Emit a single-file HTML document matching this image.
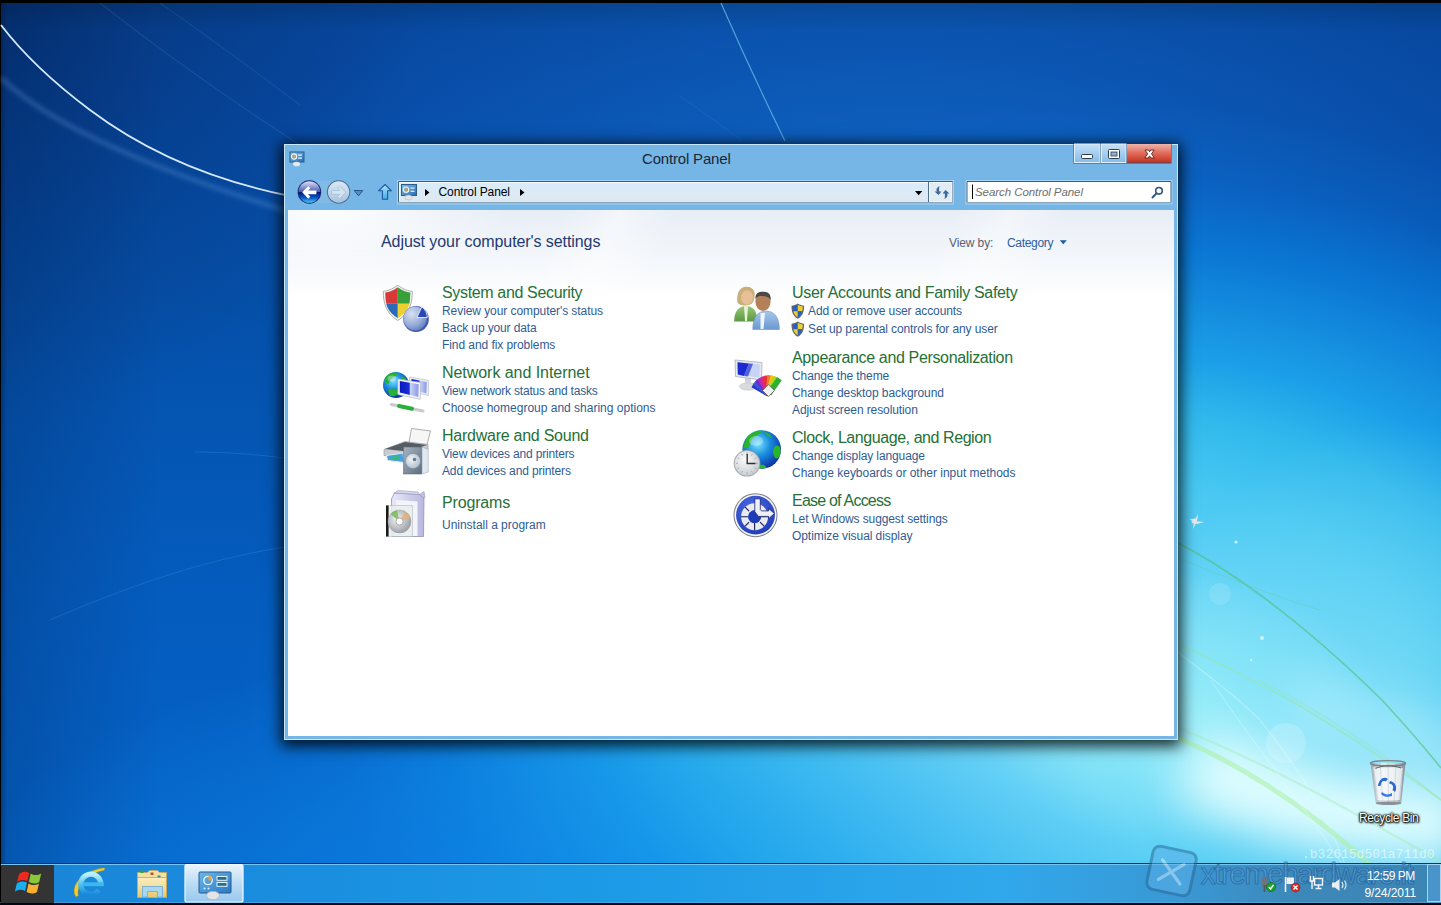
<!DOCTYPE html>
<html><head><meta charset="utf-8">
<style>
*{margin:0;padding:0;box-sizing:border-box}
html,body{width:1441px;height:905px;overflow:hidden;background:#000;font-family:"Liberation Sans",sans-serif}
#desk{position:absolute;left:1px;top:3px;width:1440px;height:902px;overflow:hidden;
 background:
  radial-gradient(ellipse 600px 260px at 560px 897px, rgba(16,140,236,.6) 0%, rgba(16,140,236,.38) 50%, rgba(16,140,236,0) 100%),
  radial-gradient(ellipse 200px 140px at 1179px 707px, rgba(170,250,250,.55) 0%, rgba(170,250,250,.25) 55%, rgba(170,250,250,0) 100%),
  radial-gradient(ellipse 260px 300px at 1399px 717px, rgba(160,236,250,.5) 0%, rgba(150,232,250,0) 100%),
  radial-gradient(ellipse 860px 596px at 1099px 697px, #86e2f8 0%, #66d4f6 21%, #48c8f2 37%, #30b8ec 49%, #1ca0e8 58%, rgba(10,122,216,.85) 77%, rgba(10,110,210,.35) 88%, rgba(8,100,200,0) 100%),
  linear-gradient(to right,rgba(0,20,60,.35) 0,rgba(0,20,60,0) 6px),
  radial-gradient(ellipse 650px 320px at 899px 217px, rgba(22,118,218,.62) 0%, rgba(22,118,218,.3) 50%, rgba(22,118,218,0) 100%),
  linear-gradient(to right,rgba(0,15,50,.18) 0,rgba(0,15,50,0) 160px),
  radial-gradient(circle 420px at 0 0,rgba(0,10,40,.3),rgba(0,10,40,0)),
  linear-gradient(to bottom,#063e86 0,#0748a0 27px,#074aa4 100px,#0550aa 297px,#045cbe 597px,#0563c8 857px);
}
.t{position:absolute;white-space:nowrap;line-height:1}
#win{position:absolute;left:284px;top:144px;width:894px;height:596px;background:#76b6e6;
 border:1px solid #c8e8f8;box-shadow:0 3px 14px 3px rgba(0,0,0,.85)}
#content{position:absolute;left:288px;top:210px;width:886px;height:526px;background:#fff;overflow:hidden}
#content .grad{position:absolute;left:0;top:0;width:100%;height:90px;background:radial-gradient(ellipse 180px 70px at 40px 0,rgba(255,255,255,.85),rgba(255,255,255,0)),linear-gradient(115deg,rgba(255,255,255,0) 30%,rgba(255,255,255,.45) 36%,rgba(255,255,255,0) 42%,rgba(255,255,255,0) 72%,rgba(255,255,255,.4) 78%,rgba(255,255,255,0) 84%),linear-gradient(to bottom,#e8eef6,#f4f7fb 55%,#fff)}
.h{font-size:16px;color:#267036}
.l{font-size:12px;color:#2f5c94}
#taskbar{position:absolute;left:1px;top:863px;width:1440px;height:40px;background:linear-gradient(to right,#1a84d6 0,#1a8ee0 300px,#1c9ae6 600px,#30a8ec 1000px,#3a98d4 1180px,#3c88b8 1300px,#3c86b6 1441px);border-top:1px solid #0e3456;box-shadow:inset 0 1px 0 #78c4f0}
</style></head><body>
<div id="desk"></div>
<svg id="desksvg" width="1441" height="905" style="position:absolute;left:0;top:0">
 <defs><filter id="blur2" x="-20%" y="-20%" width="140%" height="140%"><feGaussianBlur stdDeviation="2"/></filter>
 <filter id="blur1"><feGaussianBlur stdDeviation=".6"/></filter>
 <filter id="blur14" filterUnits="userSpaceOnUse" x="900" y="500" width="700" height="500"><feGaussianBlur stdDeviation="24"/></filter></defs>
 <path d="M1190,760 C1240,785 1290,805 1340,812 C1390,820 1430,822 1470,825" fill="none" stroke="rgba(230,255,255,.95)" stroke-width="80" filter="url(#blur14)"/>
 <path d="M1290,700 C1350,720 1400,740 1470,760" fill="none" stroke="rgba(200,245,255,.5)" stroke-width="60" filter="url(#blur14)"/>
 <path d="M1,25 C20,50 50,80 90,110 C150,155 220,182 290,196" fill="none" stroke="#d4eafc" stroke-width="1.8" filter="url(#blur1)"/>
 <path d="M1,78 C40,115 120,160 290,212" fill="none" stroke="rgba(140,200,255,.22)" stroke-width="5" filter="url(#blur2)"/>
 <path d="M100,3 C160,50 230,100 300,145" fill="none" stroke="rgba(140,200,255,.12)" stroke-width="1.2"/>
 <path d="M160,3 C220,45 260,75 300,105" fill="none" stroke="rgba(140,200,255,.10)" stroke-width="1.2"/>
 <path d="M721,3 C735,35 760,90 785,141" fill="none" stroke="rgba(110,190,235,.75)" stroke-width="1.2"/>
 <path d="M680,96 C700,110 725,128 742,141" fill="none" stroke="rgba(110,180,235,.12)" stroke-width="1"/>
 <path d="M195,452 C230,452 260,455 285,458" fill="none" stroke="rgba(140,200,255,.15)" stroke-width="1"/>
 <path d="M50,620 C120,590 200,560 285,547" fill="none" stroke="rgba(140,200,255,.15)" stroke-width="1"/>
 <!-- right side streaks -->
 <path d="M1178,543 C1230,570 1300,620 1382,700 C1405,725 1425,748 1441,768" fill="none" stroke="rgba(80,190,120,.6)" stroke-width="1.6"/>
 <path d="M1178,558 C1220,575 1270,595 1320,610" fill="none" stroke="rgba(100,200,150,.35)" stroke-width="1"/>
 <path d="M1178,644 C1215,660 1260,685 1290,700 C1350,735 1400,770 1441,800" fill="none" stroke="rgba(150,230,170,.55)" stroke-width="1.6"/>
 <path d="M1178,652 C1200,670 1230,690 1260,720 C1300,770 1330,820 1345,865" fill="none" stroke="rgba(230,255,255,.35)" stroke-width="1.2"/>
 <path d="M1178,738 C1230,760 1300,800 1370,865" fill="none" stroke="rgba(170,240,160,.55)" stroke-width="5" filter="url(#blur1)"/>
 <path d="M1178,728 C1260,760 1350,810 1441,862" fill="none" stroke="rgba(160,235,170,.4)" stroke-width="2"/>
 <path d="M1258,680 C1320,710 1380,750 1441,800" fill="none" stroke="rgba(150,230,160,.35)" stroke-width="1.4"/>
 <path d="M1211,680 C1250,740 1300,800 1343,865" fill="none" stroke="rgba(235,255,255,.35)" stroke-width="1"/>
 <circle cx="1286" cy="743" r="20" fill="rgba(255,255,255,.18)"/>
 <circle cx="1220" cy="594" r="11" fill="rgba(255,255,255,.12)"/>
 <circle cx="1236" cy="542" r="1.5" fill="rgba(255,255,255,.7)"/>
 <circle cx="1262" cy="638" r="2" fill="rgba(255,255,255,.6)"/>
 <circle cx="1251" cy="660" r="1.3" fill="rgba(255,255,255,.5)"/>
 <g transform="translate(1194,521)" fill="#f4f0f0" opacity=".9">
  <path d="M0,0 L4,-7 L3,0 Z"/><path d="M0,0 L10,1 L2,3 Z"/><path d="M0,0 L-1,8 L2,2 Z"/><path d="M0,0 L-5,-2 L1,-2 Z"/>
  <circle cx="0" cy="0" r="2.5"/>
 </g>
 <!-- recycle bin -->
 <defs>
  <linearGradient id="gBin" x1="0" y1="0" x2="1" y2="0"><stop offset="0" stop-color="#9ca4ac"/><stop offset=".35" stop-color="#e4eaee"/><stop offset=".7" stop-color="#c8d0d6"/><stop offset="1" stop-color="#848c94"/></linearGradient>
 </defs>
 <g>
  <path d="M1370.5,763 L1405.5,763 L1401.2,803.5 L1375.8,803.5 Z" fill="url(#gBin)" opacity=".95"/>
  <path d="M1373,767 C1380,770 1392,766 1403,768 L1400,800 L1377,800 Z" fill="rgba(250,252,255,.75)"/>
  <path d="M1373,763 L1378,803 M1380,763 L1383,803 M1388,763 L1388.5,803 M1396,763 L1394,803 M1403,763 L1399,803" stroke="rgba(120,130,140,.35)" stroke-width=".7"/>
  <ellipse cx="1388" cy="763.2" rx="17.6" ry="2.6" fill="none" stroke="#7a828a" stroke-width="1.3"/>
  <path d="M1375.5,768.5 C1382,765 1394,765 1401,768" stroke="#5a6066" stroke-width="1" fill="none"/>
  <path d="M1378,786 C1379,779 1384,776 1388,779 L1385.5,781.5 C1383,780 1381,782 1380.5,786 Z" fill="#2a6ad8"/>
  <path d="M1390,781 C1395,782 1398,787 1395,792 L1392.5,790 C1394,787 1393,784 1389,783.5 Z" fill="#2a6ad8"/>
  <path d="M1382,792 C1385,795 1389,795 1392,793 L1392,796 C1388,797.5 1384,797 1381,794 Z" fill="#3a7ae0"/>
  <ellipse cx="1388.5" cy="803.2" rx="12.8" ry="1.8" fill="#8a9096"/>
 </g>
</svg>
<div class="t" style="left:1359px;top:812px;font-size:12px;letter-spacing:-.36px;color:#fff;text-shadow:0 0 1px #000,0 0 2px #000,0 0 2px #000,1px 1px 2px #000,0 0 3px rgba(0,0,0,.8)">Recycle Bin</div>

<div id="win"></div>
<div id="content"><div class="grad"></div></div>

<svg id="chrome" width="1441" height="905" style="position:absolute;left:0;top:0">
 <defs>
  <linearGradient id="gBackTop" x1="0" y1="0" x2="0" y2="1"><stop offset="0" stop-color="#e4e0fa"/><stop offset="1" stop-color="#4858b0"/></linearGradient>
  <linearGradient id="gBackBot" x1="0" y1="0" x2="0" y2="1"><stop offset="0" stop-color="#001478"/><stop offset=".55" stop-color="#0a5ac8"/><stop offset="1" stop-color="#48d0f4"/></linearGradient>
  <linearGradient id="gFwd" x1="0" y1="0" x2="0" y2="1"><stop offset="0" stop-color="#dce8f4"/><stop offset="1" stop-color="#a4c4e0"/></linearGradient>
  <linearGradient id="gAddr" x1="0" y1="0" x2="0" y2="1"><stop offset="0" stop-color="#d8ecfa"/><stop offset="1" stop-color="#dee9f1"/></linearGradient>
  <linearGradient id="gCapBtn" x1="0" y1="0" x2="0" y2="1"><stop offset="0" stop-color="#c6e0f6"/><stop offset="1" stop-color="#86bce8"/></linearGradient>
  <linearGradient id="gClose" x1="0" y1="0" x2="0" y2="1"><stop offset="0" stop-color="#f0b4aa"/><stop offset=".5" stop-color="#e06a5a"/><stop offset="1" stop-color="#c8301c"/></linearGradient>
  <linearGradient id="gUp" x1="0" y1="0" x2="0" y2="1"><stop offset="0" stop-color="#b0e4fc"/><stop offset="1" stop-color="#48a8e8"/></linearGradient>
  <linearGradient id="gCPscr" x1="0" y1="0" x2="1" y2="1"><stop offset="0" stop-color="#7cc0ec"/><stop offset="1" stop-color="#2a6cb0"/></linearGradient>
 </defs>
 <!-- title icon -->
 <g transform="translate(289.5,151.5)">
  <rect x="0.5" y="0.5" width="14" height="10" fill="url(#gCPscr)" stroke="#2a5c8c"/>
  <circle cx="4.5" cy="5" r="2.6" fill="none" stroke="#f4f4f4" stroke-width="1.2"/><circle cx="4.5" cy="5" r="1.3" fill="#d8b040"/>
  <rect x="8.5" y="3" width="4" height="1.2" fill="#e8f8ff"/><rect x="8.5" y="6" width="4" height="1.2" fill="#e8f8ff"/>
  <ellipse cx="7" cy="12.5" rx="3.5" ry="2.3" fill="#e8e8ea"/>
 </g>
 <!-- caption buttons -->
 <rect x="1073.5" y="144" width="98" height="19.5" fill="#2e5070"/>
 <rect x="1074.5" y="144" width="25.5" height="18.5" fill="url(#gCapBtn)" stroke="#dff0fc" stroke-width="1"/>
 <rect x="1101.5" y="144" width="24.5" height="18.5" fill="url(#gCapBtn)" stroke="#dff0fc" stroke-width="1"/>
 <rect x="1127" y="144" width="44" height="18.5" fill="url(#gClose)"/>
 <rect x="1081.5" y="154.5" width="11" height="4" rx="1" fill="#fff" stroke="#2a3c50" stroke-width="1"/>
 <rect x="1108.5" y="149.5" width="11" height="9" rx="1" fill="#fff" stroke="#2a3c50" stroke-width="1"/>
 <rect x="1111" y="152" width="6" height="4" fill="#8ab0d8" stroke="#2a3c50" stroke-width=".8"/>
 <path d="M1145,150 L1148.5,150 L1149.6,151.8 L1150.7,150 L1154.2,150 L1151.5,153.8 L1154.4,158 L1150.9,158 L1149.6,155.9 L1148.3,158 L1144.8,158 L1147.7,153.8 Z" fill="#fff" stroke="#5a2018" stroke-width=".9"/>
 <!-- nav pill -->
 <path d="M309,181 L339,181 A11,11 0 0 1 339,203 L309,203 A11,11 0 0 1 309,181 Z" fill="#88bce6" opacity=".7"/>
 <!-- back button -->
 <circle cx="309.4" cy="192" r="11.8" fill="#14286a"/>
 <path d="M298.6,192 A10.8,10.8 0 0 1 320.2,192 Z" fill="url(#gBackTop)"/>
 <path d="M298.6,192 A10.8,10.8 0 0 0 320.2,192 Z" fill="url(#gBackBot)"/>
 <path d="M302.2,192.3 L308.2,186.2 L310.4,188.2 L307.9,190.5 L316.4,190.5 L316.4,194.3 L307.9,194.3 L310.4,196.6 L308.2,198.7 Z" fill="#fff"/>
 <!-- forward button -->
 <circle cx="338.6" cy="192" r="11.7" fill="#4f6f8f"/>
 <circle cx="338.6" cy="192" r="10.7" fill="url(#gFwd)"/>
 <path transform="translate(647.9,0) scale(-1,1)" d="M302.2,192.3 L308.2,186.2 L310.4,188.2 L307.9,190.5 L316.4,190.5 L316.4,194.3 L307.9,194.3 L310.4,196.6 L308.2,198.7 Z" fill="#d4e4f2" stroke="#9ab8d4" stroke-width=".6"/>
 <!-- dropdown -->
 <path d="M354.2,190.5 L362.8,190.5 L358.5,195.8 Z" fill="#5a8cc4" stroke="#244c84" stroke-width=".9"/>
 <!-- up arrow -->
 <path d="M385,184.5 L391.5,190.8 L387.6,190.8 L387.6,199.2 L382.4,199.2 L382.4,190.8 L378.5,190.8 Z" fill="url(#gUp)" stroke="#1a5c9c" stroke-width="1.1" stroke-linejoin="round"/>
 <!-- address bar -->
  <rect x="397.5" y="180.5" width="556" height="23.5" fill="none" stroke="#a8d8fc" stroke-width="1" opacity=".85"/>
 <rect x="398" y="181" width="555" height="22" fill="url(#gAddr)"/>
 <path d="M398.5,202.5 L398.5,181.5 L952.5,181.5 L952.5,202.5" fill="none" stroke="#3e5e7c" stroke-width="1"/>
 <line x1="398" y1="202.5" x2="953" y2="202.5" stroke="#8aa4b8" stroke-width="1"/>
 <path d="M399.5,201.5 L399.5,182.5 L951.5,182.5" fill="none" stroke="#f4faff" stroke-width="1"/>
 <line x1="928.5" y1="182" x2="928.5" y2="202" stroke="#4e6e8c" stroke-width="1"/>
 <rect x="929.5" y="182.5" width="22.5" height="19" fill="#e2ecf4" stroke="#f4f9fd" stroke-width="1"/>
 <g transform="translate(401.5,184.5)">
  <rect x="0" y="0" width="15" height="11" fill="url(#gCPscr)" stroke="#2a5c8c"/>
  <circle cx="4.5" cy="5.2" r="2.7" fill="none" stroke="#f4f4f4" stroke-width="1.2"/><circle cx="4.5" cy="5.2" r="1.4" fill="#d0a840"/>
  <rect x="9" y="3" width="4" height="1.2" fill="#e8f8ff"/><rect x="9" y="6.2" width="4" height="1.2" fill="#e8f8ff"/>
  <ellipse cx="7" cy="13" rx="3.8" ry="2.4" fill="#e6e4e8" stroke="#b0b0b8" stroke-width=".5"/>
 </g>
 <path d="M425,189 L429.5,192.5 L425,196 Z" fill="#000"/>
 <path d="M520,189 L524.5,192.5 L520,196 Z" fill="#000"/>
 <path d="M915,191 L922.3,191 L918.65,195.2 Z" fill="#000"/>
 <!-- refresh icon -->
 <path d="M939.5,186 C936.5,187.5 936,189.5 936.8,191.5 L934.5,191.5 L938.5,195 L941.5,191.5 L939.3,191.5 C938.8,189.5 939.2,187.5 939.5,186 Z" fill="#3a6aa0"/>
 <path d="M944.5,199 C947.5,197.5 948,195.5 947.2,193.5 L949.5,193.5 L945.5,190 L942.5,193.5 L944.7,193.5 C945.2,195.5 944.8,197.5 944.5,199 Z" fill="#3a6aa0"/>
 <!-- search box -->
  <rect x="966" y="180.5" width="206" height="23.5" fill="none" stroke="#a8d8fc" stroke-width="1" opacity=".85"/>
 <rect x="966.5" y="181" width="205" height="22" fill="#fff"/>
 <path d="M967,202.5 L967,181.5 L1171,181.5 L1171,202.5" fill="none" stroke="#3e5e7c" stroke-width="1"/>
 <line x1="966.5" y1="202.5" x2="1171.5" y2="202.5" stroke="#8aa4b8" stroke-width="1"/>
 <line x1="972.5" y1="184.5" x2="972.5" y2="199" stroke="#000" stroke-width="1"/>
 <circle cx="1159" cy="190.8" r="3.3" fill="none" stroke="#345a80" stroke-width="1.6"/>
 <line x1="1156.6" y1="193.3" x2="1152.5" y2="197.5" stroke="#345a80" stroke-width="2" stroke-linecap="round"/>
</svg>
<div class="t" style="left:642px;top:151px;font-size:15px;letter-spacing:-0.18px;color:#1a2636">Control Panel</div>
<div class="t" style="left:438.5px;top:186px;font-size:12px;letter-spacing:-0.1px;color:#000">Control Panel</div>
<div class="t" style="left:975px;top:187px;font-size:11.5px;letter-spacing:-0.07px;color:#6e6e6e;font-style:italic">Search Control Panel</div>


<svg id="icons" width="1441" height="905" style="position:absolute;left:0;top:0">
 <defs>
  <radialGradient id="gDisc" cx=".35" cy=".3" r=".8"><stop offset="0" stop-color="#d8e2f4"/><stop offset=".6" stop-color="#98acd8"/><stop offset="1" stop-color="#5a74b8"/></radialGradient>
  <radialGradient id="gGlobe" cx=".4" cy=".35" r=".7"><stop offset="0" stop-color="#7ae4fc"/><stop offset=".45" stop-color="#1a8ee0"/><stop offset="1" stop-color="#0a2aa0"/></radialGradient>
  <linearGradient id="gScreen" x1="0" y1="0" x2="1" y2="0"><stop offset="0" stop-color="#0a18c0"/><stop offset=".5" stop-color="#1a30d8"/><stop offset=".55" stop-color="#c8d4f8"/><stop offset="1" stop-color="#8898e8"/></linearGradient>
  <linearGradient id="gGrayBox" x1="0" y1="0" x2="1" y2="1"><stop offset="0" stop-color="#8a98a8"/><stop offset="1" stop-color="#56687a"/></linearGradient>
  <radialGradient id="gSpk" cx=".4" cy=".4" r=".7"><stop offset="0" stop-color="#f0f4f8"/><stop offset="1" stop-color="#a8b8c8"/></radialGradient>
  <linearGradient id="gBox" x1="0" y1="0" x2="1" y2="0"><stop offset="0" stop-color="#e8e8f8"/><stop offset="1" stop-color="#b8b8e0"/></linearGradient>
  <radialGradient id="gCD" cx=".4" cy=".4" r=".7"><stop offset="0" stop-color="#f4f4f4"/><stop offset=".6" stop-color="#b8bcc0"/><stop offset="1" stop-color="#909498"/></radialGradient>
  <radialGradient id="gEase" cx=".4" cy=".3" r=".8"><stop offset="0" stop-color="#4a6ae0"/><stop offset="1" stop-color="#1e38b8"/></radialGradient>
  <radialGradient id="gClk" cx=".4" cy=".35" r=".7"><stop offset="0" stop-color="#fafafa"/><stop offset="1" stop-color="#c8ccd0"/></radialGradient>
  <linearGradient id="gGreenB" x1="0" y1="0" x2="0" y2="1"><stop offset="0" stop-color="#98c878"/><stop offset="1" stop-color="#5a9840"/></linearGradient>
  <linearGradient id="gBlueB" x1="0" y1="0" x2="0" y2="1"><stop offset="0" stop-color="#a8c8ec"/><stop offset="1" stop-color="#6a98d0"/></linearGradient>
 </defs>
 <!-- System & Security: shield + disc -->
 <g>
  <path d="M397.8,285.3 C392,289.5 387.5,290.8 383.3,291.4 C383.3,302 385.5,313 397.8,320.5 C410.2,313 412.3,302 412.3,291.4 C408,290.8 403.6,289.5 397.8,285.3 Z" fill="#f4f4f4" stroke="#9a9a9a" stroke-width=".8"/>
  <path d="M397.8,287.2 C393,290.6 389.3,291.8 385.3,292.6 C385.3,296 385.5,300 386.3,303.8 L397.8,303.8 Z" fill="#d83838"/>
  <path d="M397.8,287.2 C402.6,290.6 406.3,291.8 410.3,292.6 C410.3,296 410.1,300 409.3,303.8 L397.8,303.8 Z" fill="#38a038"/>
  <path d="M386.3,303.8 L397.8,303.8 L397.8,318.3 C390.5,313.5 387.4,309 386.3,303.8 Z" fill="#2a6ab8"/>
  <path d="M409.3,303.8 L397.8,303.8 L397.8,318.3 C405.1,313.5 408.2,309 409.3,303.8 Z" fill="#eed030"/>
  <ellipse cx="416" cy="319" rx="12.8" ry="13" fill="#3a58b0"/>
  <ellipse cx="415.2" cy="318.6" rx="11.6" ry="12" fill="url(#gDisc)"/>
  <path d="M417,317.5 L421.8,306.8 C425.2,309.2 427.2,313.2 427.3,317.5 Z" fill="#2a48b0" stroke="#d8e4fc" stroke-width="1"/>
 </g>
 <!-- Network -->
 <g>
  <circle cx="396" cy="385" r="13" fill="url(#gGlobe)"/>
  <path d="M384.5,380 C386,374.5 391,372 396,372.5 C399,373 398,375.5 394.5,376.5 C391,377.5 390,380 389,383 C387,384 385,383 384.5,380 Z M388,390 C391,387.5 396,388 398.5,391.5 C398,395.5 393,397.5 389.5,395.5 Z M401,376 C404,376.5 406.5,379 407,382 C404,381.5 402,379.5 401,376 Z" fill="#28b030"/>
  <ellipse cx="392" cy="378.5" rx="4.5" ry="3" fill="rgba(255,255,255,.35)"/>
  <path d="M409.6,377 L428.7,380.5 L428.2,395.6 L409.6,391 Z" fill="#f0f0f4" stroke="#b8bcc8" stroke-width=".7"/>
  <path d="M411.5,379 L426.8,382 L426.4,393.5 L411.5,389.5 Z" fill="url(#gScreen)"/>
  <path d="M397.8,378.9 L420.7,382.5 L420.2,399.3 L397.8,394.5 Z" fill="#f4f4f8" stroke="#b0b4c0" stroke-width=".7"/>
  <path d="M399.8,381 L418.7,384.2 L418.3,397 L399.8,392.6 Z" fill="url(#gScreen)"/>
  <path d="M391.5,404.5 L423,411" stroke="#c8ccd0" stroke-width="3.2" stroke-linecap="round"/>
  <path d="M399,406 L412,408.7" stroke="#28b038" stroke-width="4" stroke-linecap="round"/>
 </g>
 <!-- Hardware & Sound -->
 <g>
  <path d="M408.5,444.5 L411.5,428.5 L430.5,431 L426.5,446.5 Z" fill="#f6f6f6" stroke="#9a9a9a" stroke-width=".8"/>
  <path d="M384,449.5 L405,441.5 L428,444.5 L428,450 L406,457 L384,455.5 Z" fill="#c8ccd0" stroke="#8a9096" stroke-width=".6"/>
  <path d="M385,449 L405,442 L427,445 L407,451.5 Z" fill="#565c64"/>
  <path d="M386.5,455.5 L403,453 L404,462.5 L387.5,460.5 Z" fill="#48a0e0" stroke="#e4eef6" stroke-width="1"/>
  <path d="M390,457 L399,455.5 L400,459.5 L391,460 Z" fill="#30c060" opacity=".7"/>
 </g>
 <g>
  <defs><linearGradient id="gSpkF" x1="0" y1="0" x2="1" y2="1"><stop offset="0" stop-color="#a8b4c2"/><stop offset="1" stop-color="#5e6c7c"/></linearGradient></defs>
  <rect x="403.5" y="447" width="18.5" height="27" fill="url(#gSpkF)" stroke="#56626e" stroke-width=".5"/>
  <path d="M422,447 L428.3,449.5 L428.3,472 L422,474 Z" fill="#dfe8f0" stroke="#9aa6b2" stroke-width=".5"/>
  <circle cx="413" cy="461" r="7.6" fill="url(#gSpk)" stroke="#7a8a9a" stroke-width=".6"/>
  <circle cx="414.5" cy="459.5" r="1.8" fill="#6a7a88"/>
 </g>
 <!-- Programs -->
 <g>
  <path d="M391.5,499 L394.5,493 L419.5,494.5 L424,498 L423.5,536.5 L392,536.5 Z" fill="url(#gBox)" stroke="#9090b8" stroke-width=".8"/>
  <path d="M394.5,493 L398,490.5 L418,492 L419.5,494.5 Z" fill="#d8d8f0" stroke="#9898c0" stroke-width=".6"/>
  <path d="M419.5,494.5 L424,491.5 L425,497.5 L424,498 Z" fill="#c0c0e4" stroke="#9898c0" stroke-width=".6"/>
  <path d="M396,500 L417.5,501.5 L417.5,536 L396,536 Z" fill="#f4f4fc"/>
  <rect x="386.5" y="505.5" width="26" height="31" fill="rgba(232,238,236,.85)" stroke="#a8b0b0" stroke-width=".5"/>
  <rect x="386" y="505.5" width="2.6" height="31" fill="#1a1a1a"/>
  <circle cx="399.5" cy="521.5" r="11.5" fill="url(#gCD)" stroke="#a0a4a8" stroke-width=".5"/>
  <path d="M399.5,521.5 L390.5,514 A11.5,11.5 0 0 1 397,510.3 Z" fill="#70b848" opacity=".75"/>
  <path d="M399.5,521.5 L405,511.5 A11.5,11.5 0 0 1 410.5,518 Z" fill="#e8b070" opacity=".75"/>
  <circle cx="399.5" cy="521.5" r="3.6" fill="#fafafa" stroke="#9aa0a4" stroke-width=".8"/>
 </g>
 <!-- User accounts -->
 <g>
  <path d="M734.2,321.5 C734,311 739,306 746,306 C753,306 757.5,311 757.2,321.5 Z" fill="url(#gGreenB)"/>
  <path d="M744,306 L748,306 L747,321 L745,321 Z" fill="#e8f0d8"/>
  <path d="M737.3,302 C736.5,293 740,287 746,286.8 C752.5,286.5 755.5,291 754.6,296 C754,302 752,305.5 746,305.5 C741,305.5 738,304.5 737.3,302 Z" fill="#c8b078"/>
  <ellipse cx="747" cy="297.5" rx="6" ry="7.2" fill="#e8c098"/>
  <path d="M752.8,329.5 C752.5,317 758,311 766,311 C774,311 779.5,317 779.4,329.5 Z" fill="url(#gBlueB)" stroke="#6a8ab8" stroke-width=".5"/>
  <path d="M760.5,313 L765,313 L763.5,329 L760.5,329 Z" fill="#f0f4f8"/>
  <ellipse cx="763" cy="301.5" rx="7.6" ry="9.4" fill="#b48058"/>
  <path d="M755.5,299 C755,293 759,291.5 764,291.8 C769,292 771,295 770.7,300 C769,296.5 765,295.5 760,296 C757,296.5 756,298 755.5,299 Z" fill="#4a4848"/>
 </g>
 <!-- Appearance -->
 <g>
  <ellipse cx="748" cy="386.5" rx="8.5" ry="3.8" fill="#d8dadc" stroke="#c0c4c8" stroke-width=".5"/>
  <rect x="745" y="378" width="6" height="6" fill="#d0d4d8"/>
  <path d="M735.1,360 L762,362.5 L761.5,380 L735.5,376.5 Z" fill="#e4e8ee" stroke="#a8b0bc" stroke-width=".8"/>
  <path d="M737.5,362.3 L759.8,364.4 L759.4,377.6 L737.8,374.6 Z" fill="#c8d4f4"/>
  <path d="M737.5,362.3 L749,363.4 L744,376 L737.8,374.6 Z" fill="#1a2ad0"/>
  <path d="M749,363.4 L753,363.8 L748,376.6 L744,376 Z" fill="#5060e0"/>
 <rect x="0" y="-3" width="18.5" height="5.6" fill="#2838c8" transform="translate(769,394) rotate(-150.0)"/>
 <rect x="0" y="-3" width="18.5" height="5.6" fill="#3a58d8" transform="translate(769,394) rotate(-139.4)"/>
 <rect x="0" y="-3" width="18.5" height="5.6" fill="#6a30c8" transform="translate(769,394) rotate(-128.9)"/>
 <rect x="0" y="-3" width="18.5" height="5.6" fill="#b828c0" transform="translate(769,394) rotate(-118.3)"/>
 <rect x="0" y="-3" width="18.5" height="5.6" fill="#e02878" transform="translate(769,394) rotate(-107.8)"/>
 <rect x="0" y="-3" width="18.5" height="5.6" fill="#e83030" transform="translate(769,394) rotate(-97.2)"/>
 <rect x="0" y="-3" width="18.5" height="5.6" fill="#f07820" transform="translate(769,394) rotate(-86.7)"/>
 <rect x="0" y="-3" width="18.5" height="5.6" fill="#f0c020" transform="translate(769,394) rotate(-76.1)"/>
 <rect x="0" y="-3" width="18.5" height="5.6" fill="#a8d820" transform="translate(769,394) rotate(-65.6)"/>
 <rect x="0" y="-3" width="18.5" height="5.6" fill="#30b030" transform="translate(769,394) rotate(-55.0)"/>
  <path d="M762.5,390.5 L768.5,384.5 L774.5,390.5 L768.5,396.5 Z" fill="#f0f0f0" stroke="#505050" stroke-width=".7"/>
 </g>
 <!-- Clock & globe -->
 <g>
  <circle cx="761.7" cy="449.5" r="19.3" fill="url(#gGlobe)"/>
  <path d="M743.5,447 C744.5,438 751,431.5 759,430.5 C763,430.5 762,433 758,434.5 C753,436.5 751,440 750,445 C748.5,448.5 744,449.5 743.5,447 Z M773.5,448 C776,443.5 780.5,445 780.8,451 C780.5,458 776,461 774,456 C773,453 772.5,450.5 773.5,448 Z M757,465.5 C760.5,463.5 765,464.5 766.5,467.5 C763,469.5 759.5,469 757,465.5 Z M764,432 C768,432.5 771,434.5 772,437 C769,437 766,435 764,432 Z" fill="#2ab42a"/>
  <ellipse cx="756" cy="441" rx="7" ry="5" fill="rgba(255,255,255,.3)"/>
  <circle cx="747" cy="463.3" r="13.3" fill="#a8acb0"/>
  <circle cx="747" cy="463.3" r="12.2" fill="url(#gClk)"/>
  <g stroke="#9aa0a6" stroke-width=".9"><path d="M747,452.5 L747,454.3 M747,472.3 L747,474.1 M736.2,463.3 L738,463.3 M756,463.3 L757.8,463.3 M752.4,454 L751.5,455.5 M741.6,454 L742.5,455.5 M756.3,468.7 L754.8,467.8 M737.7,468.7 L739.2,467.8 M752.4,472.6 L751.5,471.1 M741.6,472.6 L742.5,471.1 M756.3,457.9 L754.8,458.8 M737.7,457.9 L739.2,458.8"/></g>
  <path d="M747.2,454 L747.2,463.5 L755.5,463.5" fill="none" stroke="#303030" stroke-width="1.4"/>
 </g>
 <!-- Ease of access -->
 <g>
  <circle cx="755.5" cy="515.2" r="22" fill="#7a7e86"/>
  <circle cx="755.5" cy="515.2" r="21" fill="#f4f6fa"/>
  <circle cx="755.5" cy="515.2" r="19.4" fill="url(#gEase)"/>
  <circle cx="754.6" cy="516.7" r="9.95" fill="none" stroke="#e8eaf0" stroke-width="7.1"/>
  <g stroke="#101c50" stroke-width="1.1">
   <path d="M741,516.7 L748.2,516.7 M754.6,523.1 L754.6,530.2 M749.1,522.2 L745.1,526.2 M760.1,522.2 L764.1,526.2 M749.1,511.2 L745.1,507.2 M761,516.7 L768.2,516.7"/>
  </g>
  <circle cx="754.6" cy="516.7" r="6.4" fill="#1f3cb8"/>
  <path d="M754.8,498.8 L760.3,498.8 L760.3,509.6 L761.5,510.9 L768.6,510.9 L768.6,508.4 L774.4,513.6 L768.6,518.8 L768.6,516.4 L758.4,516.4 L754.8,511.8 Z" fill="#eef0f6" stroke="#14226a" stroke-width=".8" stroke-linejoin="round"/>
 </g>
 <!-- UAC shields next to links -->
 <g id="uac">
  <path d="M797.8,303.5 C795.5,305 793.5,305.5 791.5,305.7 C791.5,311 792.5,316 797.8,318.7 C803.1,316 804.1,311 804.1,305.7 C802.1,305.5 800.1,305 797.8,303.5 Z" fill="#606870"/>
  <path d="M797.8,304.8 C795.8,306 794.3,306.4 792.8,306.6 C792.8,308.5 793,310 793.4,311.2 L797.8,311.2 Z" fill="#2a60c0"/>
  <path d="M797.8,304.8 C799.8,306 801.3,306.4 802.8,306.6 C802.8,308.5 802.6,310 802.2,311.2 L797.8,311.2 Z" fill="#f0d030"/>
  <path d="M793.4,311.2 L797.8,311.2 L797.8,317.2 C795,315.5 793.9,313.5 793.4,311.2 Z" fill="#f0d030"/>
  <path d="M802.2,311.2 L797.8,311.2 L797.8,317.2 C800.6,315.5 801.7,313.5 802.2,311.2 Z" fill="#2a60c0"/>
 </g>
 <use href="#uac" transform="translate(0,18)"/>
 <!-- view by triangle -->
 <path d="M1059.8,240.2 L1066.8,240.2 L1063.3,244.2 Z" fill="#1e5aa0"/>
</svg>
<div class="t" style="left:381px;top:234px;font-size:16px;letter-spacing:-0.08px;color:#1e3a70">Adjust your computer's settings</div>
<div class="t" style="left:949px;top:237px;font-size:12px;letter-spacing:-0.11px;color:#5a6272">View by:</div>
<div class="t" style="left:1007px;top:237px;font-size:12px;letter-spacing:-0.31px;color:#2a5fa0">Category</div>
<div class="t h" style="left:442px;top:285px;letter-spacing:-0.347px">System and Security</div>
<div class="t l" style="left:442px;top:305px;letter-spacing:-0.071px">Review your computer's status</div>
<div class="t l" style="left:442px;top:322px;letter-spacing:-0.131px">Back up your data</div>
<div class="t l" style="left:442px;top:339px;letter-spacing:-0.07px">Find and fix problems</div>
<div class="t h" style="left:442px;top:365px;letter-spacing:-0.047px">Network and Internet</div>
<div class="t l" style="left:442px;top:385px;letter-spacing:-0.193px">View network status and tasks</div>
<div class="t l" style="left:442px;top:402px">Choose homegroup and sharing options</div>
<div class="t h" style="left:442px;top:428px;letter-spacing:-0.25px">Hardware and Sound</div>
<div class="t l" style="left:442px;top:448px;letter-spacing:-0.167px">View devices and printers</div>
<div class="t l" style="left:442px;top:465px;letter-spacing:-0.135px">Add devices and printers</div>
<div class="t h" style="left:442px;top:495px;letter-spacing:-0.164px">Programs</div>
<div class="t l" style="left:442px;top:519px;letter-spacing:-0.022px">Uninstall a program</div>
<div class="t h" style="left:792px;top:285px;letter-spacing:-0.333px">User Accounts and Family Safety</div>
<div class="t l" style="left:808px;top:305px;letter-spacing:-0.104px">Add or remove user accounts</div>
<div class="t l" style="left:808px;top:323px;letter-spacing:-0.103px">Set up parental controls for any user</div>
<div class="t h" style="left:792px;top:350px;letter-spacing:-0.352px">Appearance and Personalization</div>
<div class="t l" style="left:792px;top:370px;letter-spacing:-0.1px">Change the theme</div>
<div class="t l" style="left:792px;top:387px;letter-spacing:-0.062px">Change desktop background</div>
<div class="t l" style="left:792px;top:404px;letter-spacing:-0.096px">Adjust screen resolution</div>
<div class="t h" style="left:792px;top:430px;letter-spacing:-0.431px">Clock, Language, and Region</div>
<div class="t l" style="left:792px;top:450px;letter-spacing:-0.114px">Change display language</div>
<div class="t l" style="left:792px;top:467px;letter-spacing:-0.018px">Change keyboards or other input methods</div>
<div class="t h" style="left:792px;top:493px;letter-spacing:-0.785px">Ease of Access</div>
<div class="t l" style="left:792px;top:513px;letter-spacing:-0.111px">Let Windows suggest settings</div>
<div class="t l" style="left:792px;top:530px;letter-spacing:-0.068px">Optimize visual display</div>



<div id="taskbar"></div>
<div style="position:absolute;left:0;top:902px;width:1441px;height:1px;background:rgba(120,180,220,.45)"></div>
<div style="position:absolute;left:0;top:903px;width:1441px;height:2px;background:#000814"></div>
<svg id="tbsvg" width="1441" height="905" style="position:absolute;left:0;top:0">
 <defs>
  <linearGradient id="gActive" x1="0" y1="0" x2="0" y2="1"><stop offset="0" stop-color="#eaf4fc"/><stop offset=".5" stop-color="#bcdcf4"/><stop offset="1" stop-color="#98c8ee"/></linearGradient>
  <linearGradient id="gIE" x1="0" y1="0" x2="0" y2="1"><stop offset="0" stop-color="#b8f0fc"/><stop offset=".6" stop-color="#40b8f0"/><stop offset="1" stop-color="#1a88d8"/></linearGradient>
  <linearGradient id="gFold" x1="0" y1="0" x2="0" y2="1"><stop offset="0" stop-color="#fcf0c0"/><stop offset="1" stop-color="#e8c870"/></linearGradient>
  <linearGradient id="gTbScr" x1="0" y1="0" x2="1" y2="1"><stop offset="0" stop-color="#6ab8ec"/><stop offset="1" stop-color="#2a78c0"/></linearGradient>
 </defs>
 <!-- start button -->
 <rect x="1" y="865" width="53" height="38" fill="#343434"/>
 <g transform="translate(30,882) scale(1.17)">
  <path d="M-9.5,-6.5 C-7,-9.5 -3.5,-9.3 -0.7,-7.7 L-2.3,-0.6 C-5,-2.3 -8,-2.2 -11,-0.1 Z" fill="#f0281e"/>
  <path d="M0.6,-7.2 C3.3,-5.5 6.3,-5.4 9.6,-7.3 L7.9,0 C5,1.9 2,1.7 -1,0.1 Z" fill="#88c83a"/>
  <path d="M-11.3,1.2 C-8.3,-0.9 -5.3,-1 -2.6,0.6 L-4.2,7.7 C-6.9,6.1 -9.9,6.2 -12.9,8.3 Z" fill="#18b0f0"/>
  <path d="M-1.3,1.3 C1.6,3 4.6,3.1 7.6,1.2 L6,8.5 C3,10.4 0,10.2 -2.9,8.6 Z" fill="#f8b030"/>
 </g>
 <!-- IE -->
 <g>
  <path d="M75.8,896.8 C69.5,886 82,871.5 102.8,868 C105.8,867.6 105.5,870.2 102.3,870.8 C86,874.5 76.5,884.5 78.3,895.8 Z" fill="#f2cc30" stroke="#b88c10" stroke-width=".5"/>
  <path d="M100.9,884.3 A10.1,10.1 0 1 0 99,890.2" fill="none" stroke="url(#gIE)" stroke-width="5.2"/>
  <rect x="82.5" y="882.3" width="21.3" height="3.9" fill="#3cb8ee"/>
 </g>
 <!-- Explorer folder -->
 <g transform="translate(136.5,869.5)">
  <path d="M1,3 L11,3 L13,1 L21,1 L23,3 L30,3 L30,28 L1,28 Z" fill="#f4e0a0" stroke="#c8a860" stroke-width=".8"/>
  <rect x="4" y="1" width="3" height="2.5" fill="#38a038"/><rect x="14" y="3" width="3" height="2.5" fill="#c05030"/><rect x="21" y="6" width="3" height="2.5" fill="#508080"/>
  <path d="M1,8 L30,8 L30,28 L1,28 Z" fill="url(#gFold)" stroke="#c8a050" stroke-width=".8"/>
  <path d="M6,27.5 L6,17 L26,17 L26,27.5 L21,27.5 L21,22 L11,22 L11,27.5 Z" fill="#a8d8f0" stroke="#68a8d8" stroke-width=".8"/>
 </g>
 <!-- active CP button -->
 <rect x="185" y="864.5" width="58" height="37.5" rx="2" fill="url(#gActive)" stroke="#f4fbff" stroke-width="1.2"/>
 <g transform="translate(198.5,871.5)">
  <rect x="0.5" y="0.5" width="32" height="21" rx="1" fill="url(#gTbScr)" stroke="#2a5a8c" stroke-width="1"/>
  <circle cx="9.5" cy="9" r="4.2" fill="none" stroke="#f0f8ff" stroke-width="1.3"/>
  <path d="M10,4.2 A4.5,4.5 0 0 1 13.5,9 L10,9 Z" fill="#f8a020"/>
  <rect x="18.5" y="5" width="10" height="3.8" fill="#2a6a8a" stroke="#e0f6ff" stroke-width="1"/>
  <rect x="18.5" y="11" width="10" height="3.8" fill="#2a6a8a" stroke="#e0f6ff" stroke-width="1"/>
  <circle cx="6" cy="17" r="1.1" fill="#c8f0ff"/><circle cx="10" cy="17" r="1.1" fill="#e0e8f0"/>
  <ellipse cx="14.5" cy="24" rx="6.5" ry="4.2" fill="#e4e4e8" stroke="#a8a8b0" stroke-width=".6"/>
 </g>
 <!-- watermark logo -->
 <g transform="translate(1171.5,871) rotate(12)" opacity=".55">
  <rect x="-22" y="-22" width="44" height="44" rx="7" fill="#5ab0e8" stroke="#2a6a98" stroke-width="3"/>
  <path d="M-11,-9 L11,11 M11,-9 L-11,11" stroke="#c8ecfc" stroke-width="3.2" stroke-linecap="round"/>
 </g>
 <text x="1201" y="884" font-family="Liberation Sans" font-size="29" letter-spacing="-1.2" fill="rgba(110,180,235,.35)" stroke="rgba(25,85,145,.55)" stroke-width="1.1">xtremehardware.it</text>
 <text x="1302" y="857.5" font-family="Liberation Mono" font-size="13" fill="rgba(255,255,255,.6)">.b32615d501a711d0</text>
 <!-- tray icons -->
 <g transform="translate(1261,877)">
  <rect x="1" y="0" width="5" height="10" rx="1.5" fill="#707478"/><rect x="2.5" y="8" width="2" height="7" fill="#585c60"/>
  <circle cx="10" cy="10" r="4.6" fill="#20a030" stroke="#106818" stroke-width=".7"/>
  <path d="M7.8,10 L9.5,12 L12.5,7.8" stroke="#fff" stroke-width="1.4" fill="none"/>
 </g>
 <g transform="translate(1284,877)">
  <line x1="1.5" y1="0" x2="1.5" y2="15" stroke="#f4f4f4" stroke-width="1.6"/>
  <path d="M2.5,0.5 L10,0.5 L10,7 L2.5,7 Z" fill="#f0f0f0"/>
  <circle cx="11.5" cy="10.5" r="4.4" fill="#e02828" stroke="#a01010" stroke-width=".6"/>
  <path d="M9.5,8.5 L13.5,12.5 M13.5,8.5 L9.5,12.5" stroke="#fff" stroke-width="1.3"/>
 </g>
 <g transform="translate(1309.5,876)" fill="none" stroke="#f4f8fc" stroke-width="1.4">
  <path d="M1,0 L1,5 M4,0 L4,5 M0,5 L5,5 M2.5,5 L2.5,13"/>
  <rect x="5" y="2.5" width="8" height="6.5"/><path d="M9,9 L9,12 M6,12.5 L12,12.5"/>
 </g>
 <g transform="translate(1332,879)">
  <path d="M0,3.5 L3,3.5 L7.5,0 L7.5,12 L3,8.5 L0,8.5 Z" fill="#e8eef4"/>
  <path d="M10,3 Q12,6 10,9 M12.5,1.5 Q15.5,6 12.5,10.5" stroke="#e8eef4" stroke-width="1.1" fill="none"/>
 </g>
 <!-- show desktop -->
 <rect x="1427.5" y="864.5" width="13" height="37" fill="#4a94cc" stroke="#a8d4f0" stroke-width="1"/>
</svg>
<div class="t" style="left:1367px;top:870px;font-size:12px;letter-spacing:-0.43px;color:#fff">12:59 PM</div>
<div class="t" style="left:1364.5px;top:887px;font-size:12px;letter-spacing:-0.11px;color:#fff">9/24/2011</div>

</body></html>
